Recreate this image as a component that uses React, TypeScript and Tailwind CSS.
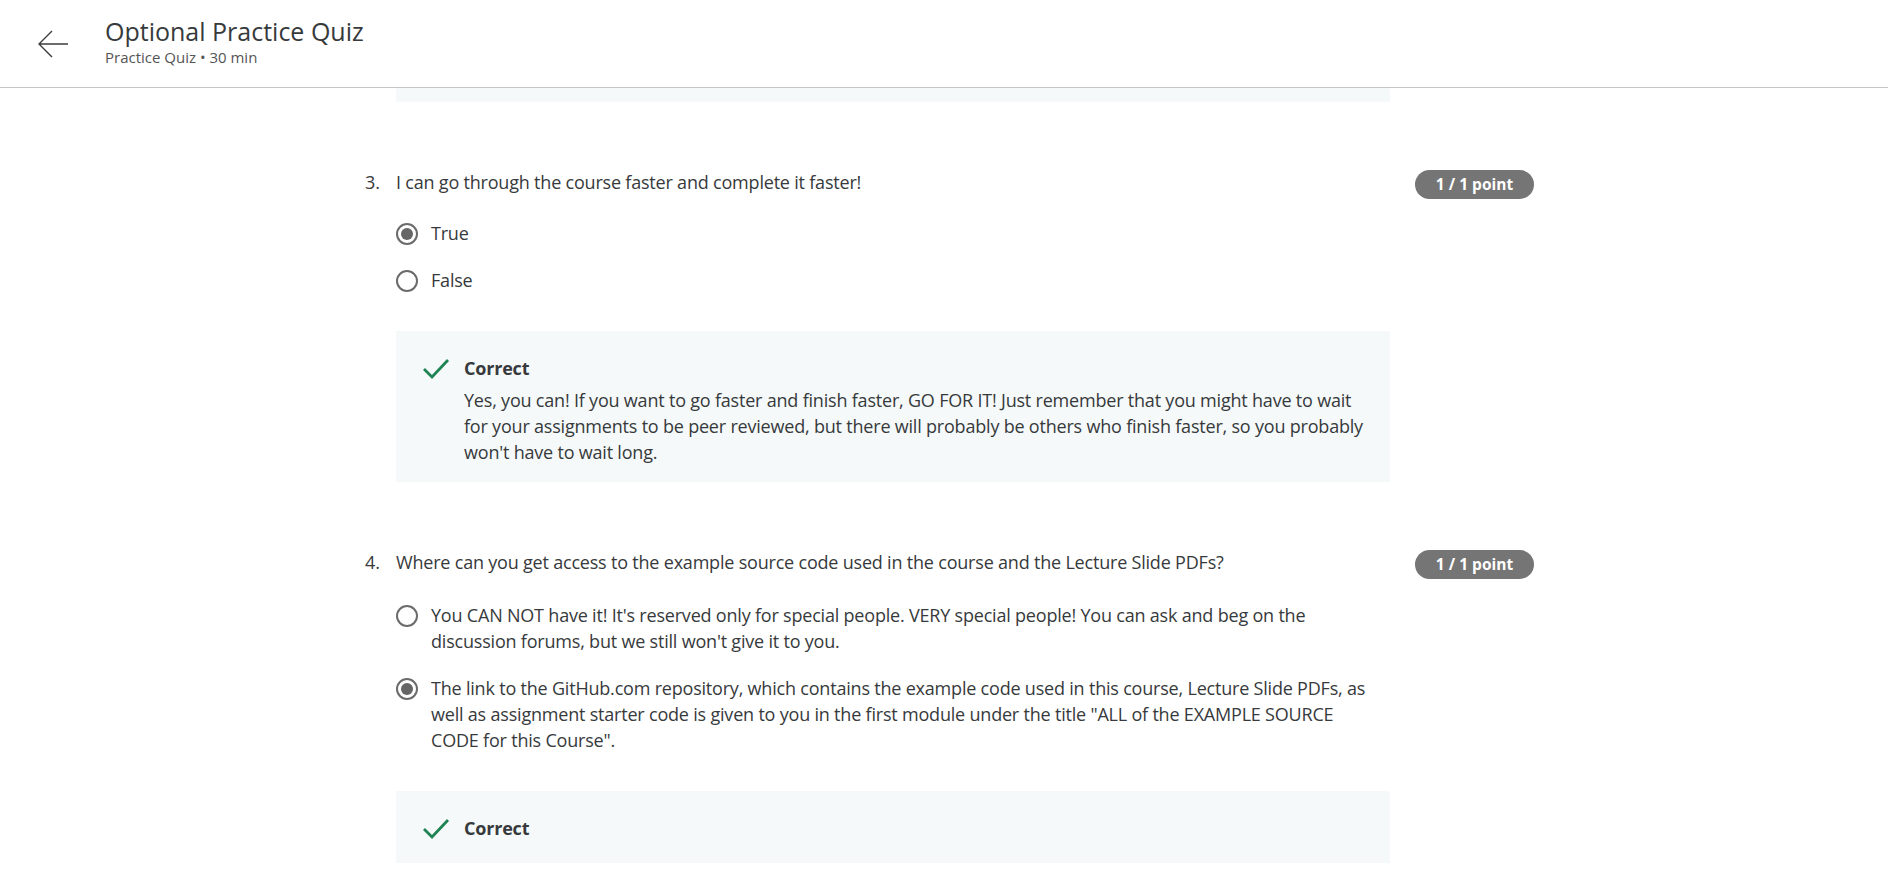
const font = { fontFamily: '"Open Sans", "Liberation Sans", sans-serif' };

function Radio({ checked }: { checked?: boolean }) {
  return (
    <span className="mt-[2px] flex h-[22px] w-[22px] shrink-0 items-center justify-center rounded-full border-[2px] border-[#6b6b6b]">
      {checked && <span className="h-[12px] w-[12px] rounded-full bg-[#666666]" />}
    </span>
  );
}

function Check() {
  return (
    <svg width="28" height="22" viewBox="0 0 28 22" className="shrink-0">
      <path d="M2 12 L10 20 L26 3" fill="none" stroke="#1f8354" strokeWidth="2.8" />
    </svg>
  );
}

function Option({ checked, text }: { checked?: boolean; text: string }) {
  return (
    <div className="flex gap-[13px]">
      <Radio checked={checked} />
      <div className="w-[942px] text-[18px] leading-[25.6px] tracking-[-0.2px] text-[#373a3c]">{text}</div>
    </div>
  );
}

function Feedback({ body }: { body?: string }) {
  return (
    <div
      className={
        body
          ? "mt-[38px] w-[994px] bg-[#f5f9f9] pt-[25px] pb-[17px] pl-[26px] pr-[20px]"
          : "mt-[38px] w-[994px] bg-[#f5f9f9] pt-[25px] pb-[23px] pl-[26px] pr-[20px]"
      }
    >
      <div className="flex gap-[14px]">
        <div className="pt-[1px]">
          <Check />
        </div>
        <div>
          <div className="text-[18px] font-bold leading-[24px] tracking-[-0.2px] text-[#373a3c]">Correct</div>
          {body && (
            <div className="mt-[7px] text-[18px] leading-[26px] tracking-[-0.2px] text-[#373a3c]">{body}</div>
          )}
        </div>
      </div>
    </div>
  );
}

function Question({
  num,
  title,
  children,
}: {
  num: number;
  title: string;
  children: React.ReactNode;
}) {
  return (
    <div className="flex">
      <div className="w-[31px] text-[18px] leading-[24px] text-[#373a3c]">{num}.</div>
      <div className="w-[994px]">
        <div className="text-[18px] leading-[24px] tracking-[-0.2px] text-[#373a3c]">{title}</div>
        {children}
      </div>
      <div className="ml-[25px]">
        <span className="flex h-[29px] w-[119px] items-center justify-center rounded-full bg-[#757575] text-[15.5px] font-bold text-white">
          1 / 1 point
        </span>
      </div>
    </div>
  );
}

export default function App() {
  return (
    <div className="h-[873px] w-[1888px] overflow-hidden bg-white" style={font}>
      <header className="flex h-[88px] items-center border-b border-[#c4c4c4]">
        <div className="ml-[37px] flex h-[40px] w-[32px] items-center">
          <svg width="32" height="32" viewBox="0 0 32 32">
            <path d="M31 16 H3 M15 3 L2 16 L15 29" fill="none" stroke="#3c3c3c" strokeWidth="1.4" />
          </svg>
        </div>
        <div className="ml-[36px] -mt-[6px]">
          <div className="text-[25px] leading-[32px] text-[#373a3c]">Optional Practice Quiz</div>
          <div className="text-[15px] leading-[20px] text-[#555]">Practice Quiz • 30 min</div>
        </div>
      </header>

      <div className="pl-[365px]">
        <div className="ml-[31px] h-[14px] w-[994px] bg-[#f5f9f9]" />

        <div className="mt-[68px]">
          <Question num={3} title="I can go through the course faster and complete it faster!">
            <div className="mt-[27px] flex flex-col gap-[21px]">
              <Option checked text="True" />
              <Option text="False" />
            </div>
            <Feedback body="Yes, you can! If you want to go faster and finish faster, GO FOR IT! Just remember that you might have to wait for your assignments to be peer reviewed, but there will probably be others who finish faster, so you probably won't have to wait long." />
          </Question>
        </div>

        <div className="mt-[68px]">
          <Question
            num={4}
            title="Where can you get access to the example source code used in the course and the Lecture Slide PDFs?"
          >
            <div className="mt-[29px] flex flex-col gap-[22px]">
              <Option text="You CAN NOT have it! It's reserved only for special people. VERY special people! You can ask and beg on the discussion forums, but we still won't give it to you." />
              <Option
                checked
                text={'The link to the GitHub.com repository, which contains the example code used in this course, Lecture Slide PDFs, as well as assignment starter code is given to you in the first module under the title "ALL of the EXAMPLE SOURCE CODE for this Course".'}
              />
            </div>
            <Feedback />
          </Question>
        </div>
      </div>
    </div>
  );
}
